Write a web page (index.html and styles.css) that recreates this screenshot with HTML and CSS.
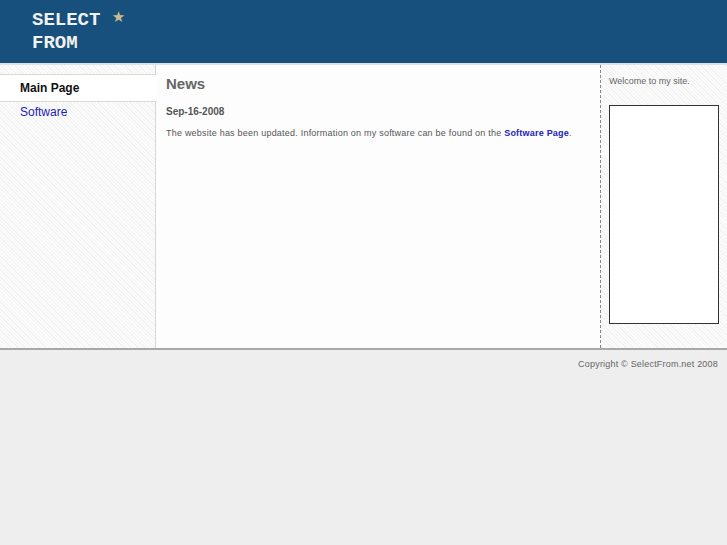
FILE: index.html
```html
<!DOCTYPE html>
<html>
<head>
<meta charset="utf-8">
<title>SelectFrom.net</title>
<link rel="stylesheet" href="styles.css">
</head>
<body>
<div class="header">
  <div class="logo"><span class="line">SELECT <em class="star">★</em></span><span class="line">FROM</span></div>
</div>
<div class="main">
  <div class="nav">
    <a class="nav-item active" href="#">Main Page</a>
    <a class="nav-item" href="#">Software</a>
  </div>
  <div class="content">
    <h1 class="title">News</h1>
    <h2 class="date">Sep-16-2008</h2>
    <p class="text">The website has been updated. Information on my software can be found on the <a href="#">Software Page</a>.</p>
  </div>
  <div class="aside">
    <p class="welcome">Welcome to my site.</p>
    <div class="box"></div>
  </div>
</div>
<div class="footer">Copyright © SelectFrom.net 2008</div>
</body>
</html>
```
FILE: styles.css
```css
html, body {
  margin: 0;
  padding: 0;
  background: #eeeeee;
  font-family: "Liberation Sans", Arial, sans-serif;
}
.header {
  height: 63px;
  background: #17507c;
  border-bottom: 2px solid #dde2e6;
  box-sizing: content-box;
}
.logo {
  display: flex;
  flex-direction: column;
  padding: 9px 0 0 32px;
  font-family: "Liberation Mono", "Courier New", monospace;
  font-weight: bold;
  font-size: 19px;
  line-height: 23px;
  color: #f2f2f2;
}
.line {
  height: 23px;
}
.star {
  font-style: normal;
  font-family: "DejaVu Sans", sans-serif;
  font-weight: normal;
  font-size: 15px;
  line-height: 0;
  color: #c9bb8f;
  vertical-align: 3px;
  margin-left: 0;
}
.main {
  display: flex;
  height: 283px;
  background: repeating-linear-gradient(45deg, #f3f3f3 0 1px, #fcfcfc 1px 2.5px);
  border-bottom: 2px solid #a9a9a9;
}
.nav {
  width: 155px;
  flex: none;
  border-right: 1px solid #d8d8d2;
  padding-top: 9px;
  display: flex;
  flex-direction: column;
}
.nav-item {
  display: block;
  padding-left: 20px;
  font-size: 12px;
  text-decoration: none;
  color: #2222bb;
  height: 21px;
  line-height: 21px;
}
.nav-item.active {
  background: #ffffff;
  color: #111111;
  font-weight: bold;
  height: 26px;
  line-height: 26px;
  border-top: 1px solid #dcdcd6;
  border-bottom: 1px solid #dcdcd6;
  margin-right: -2px;
  position: relative;
}
.content {
  flex: 1;
  background: #fdfdfd;
  padding: 0 10px 0 10px;
}
.title {
  margin: 10px 0 0 0;
  font-size: 15px;
  line-height: 18px;
  color: #666666;
  font-weight: bold;
}
.date {
  margin: 12px 0 0 0;
  font-size: 10px;
  line-height: 13px;
  color: #555555;
  font-weight: bold;
}
.text {
  margin: 9px 0 0 0;
  font-size: 9px;
  line-height: 12px;
  letter-spacing: 0.22px;
  color: #555555;
}
.text a {
  color: #2222bb;
  font-weight: bold;
  text-decoration: none;
}
.aside {
  width: 118px;
  flex: none;
  border-left: 1px dashed #888888;
  padding-left: 8px;
}
.welcome {
  margin: 10px 0 0 0;
  font-size: 9px;
  line-height: 12px;
  color: #666666;
}
.box {
  margin-top: 18px;
  width: 108px;
  height: 217px;
  background: #ffffff;
  border: 1px solid #333333;
}
.footer {
  text-align: right;
  padding: 8px 9px 0 0;
  font-size: 9px;
  line-height: 12px;
  letter-spacing: 0.2px;
  color: #666666;
}
```
